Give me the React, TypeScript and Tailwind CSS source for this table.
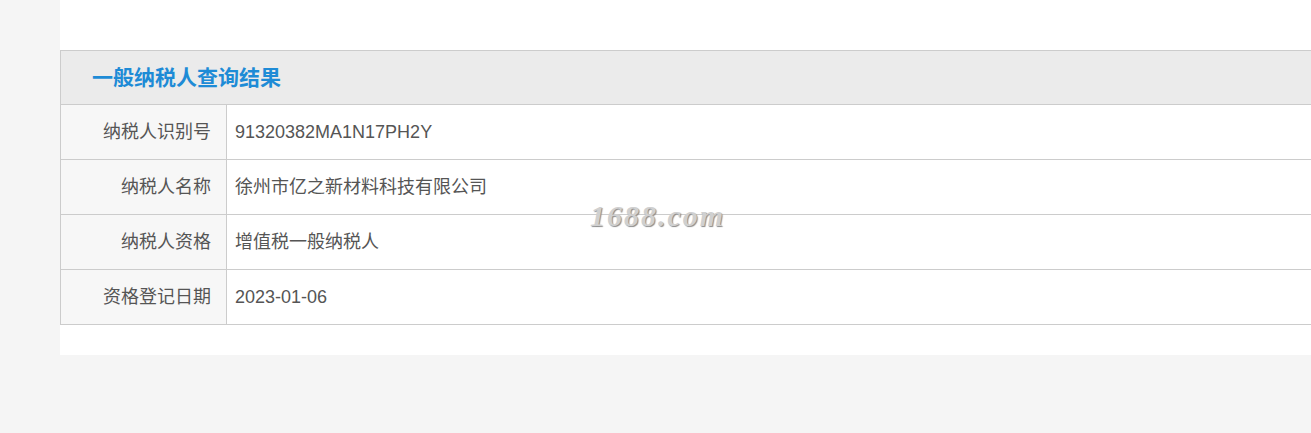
const rows = [
  { label: '纳税人识别号', value: '91320382MA1N17PH2Y' },
  { label: '纳税人名称', value: '徐州市亿之新材料科技有限公司' },
  { label: '纳税人资格', value: '增值税一般纳税人' },
  { label: '资格登记日期', value: '2023-01-06' },
]

export default function App() {
  return (
    <div className="min-h-[433px] w-[1311px] overflow-hidden bg-[#f5f5f5] font-['Liberation_Sans','Noto_Sans_CJK_SC',sans-serif]">
      <div className="relative ml-[60px] w-[1300px] bg-white pt-[50px] pb-[30px]">
        <table className="w-full border-collapse border-l border-[#cccccc] text-[18px] text-[#555555]">
          <thead>
            <tr>
              <th
                colSpan={2}
                className="h-[54px] border-t border-b border-[#cccccc] bg-[#ebebeb] pl-[31px] text-left text-[21px] font-bold text-[#1e8bd6]"
              >
                一般纳税人查询结果
              </th>
            </tr>
          </thead>
          <tbody>
            {rows.map((r) => (
              <tr key={r.label} className="h-[55px] border-b border-[#cccccc]">
                <td className="w-[166px] border-r border-[#cccccc] bg-[#f7f7f7] pr-[15px] text-right font-normal">
                  {r.label}
                </td>
                <td className="pl-[8px] text-left">{r.value}</td>
              </tr>
            ))}
          </tbody>
        </table>
        <div className="pointer-events-none absolute left-[530px] top-[201px] font-['Liberation_Serif',serif] text-[30px] leading-none font-bold italic tracking-[2px] text-[#d0d0d0] [text-shadow:1px_1px_1px_#8a8a8a]">
          1688.com
        </div>
      </div>
    </div>
  )
}
